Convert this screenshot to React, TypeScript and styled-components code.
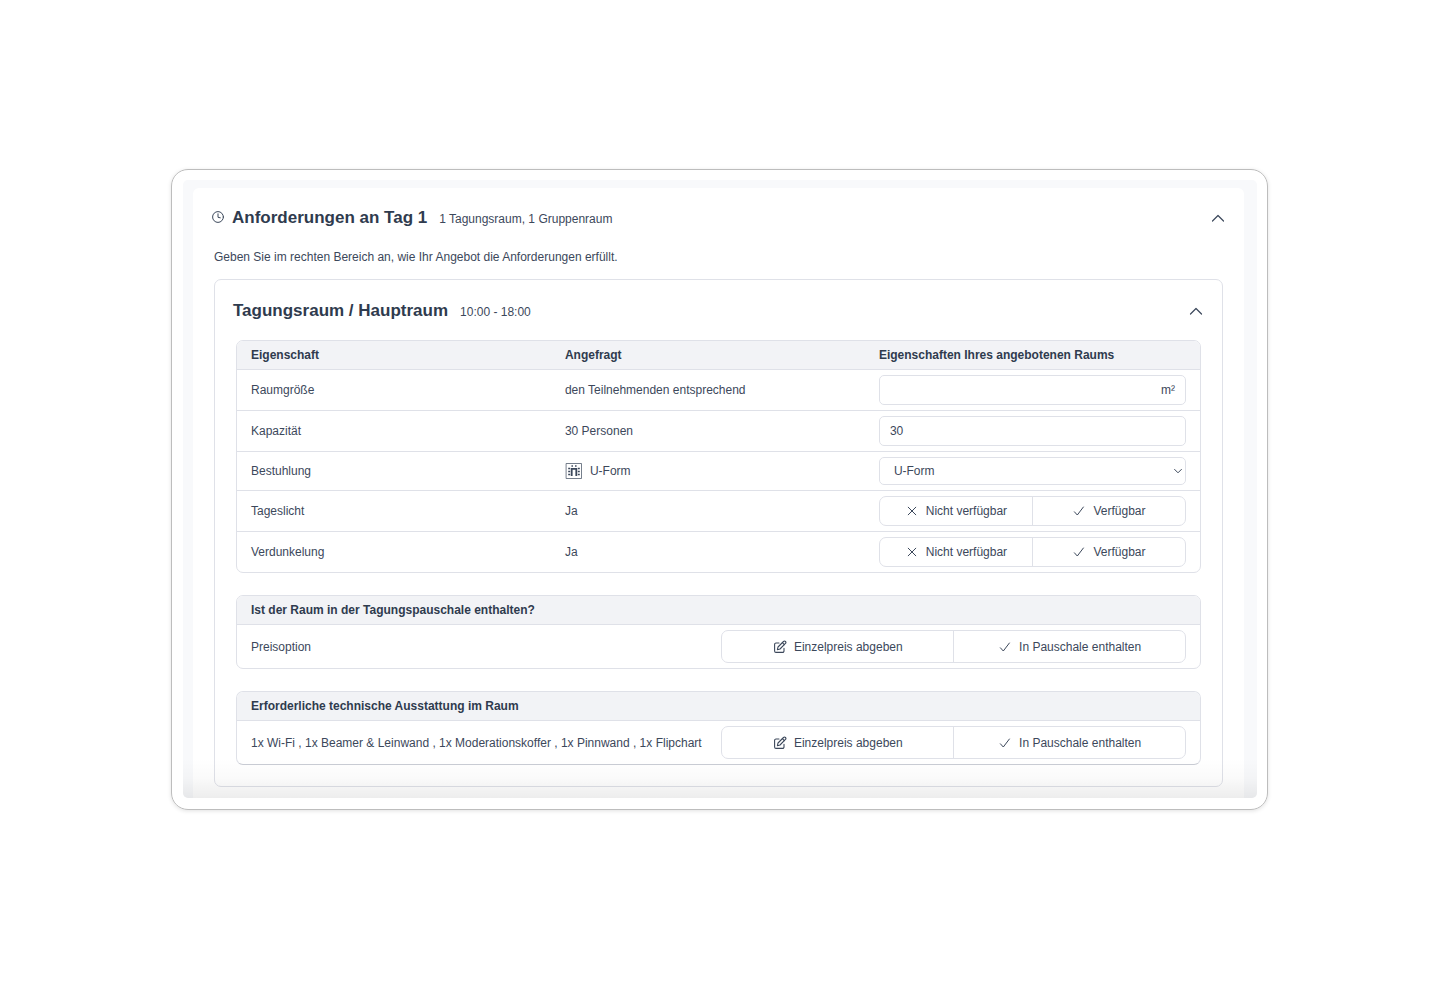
import React from "react";
import styled, { createGlobalStyle } from "styled-components";

const line = "#dfe1e8";
const ink = "#3c485b";
const strong = "#2f3b4e";

const GlobalStyle = createGlobalStyle`
  *, *::before, *::after { box-sizing: border-box; }
  body {
    margin: 0;
    background: #fff;
    color: ${ink};
    font-family: "Liberation Sans", Arial, sans-serif;
    font-size: 12px;
    line-height: 18px;
  }
  button, input, select { font: inherit; color: inherit; }
`;

const Page = styled.main`
  min-height: 100vh;
  padding: 169px 172px 169px 171px;
`;

const Frame = styled.div`
  padding: 10px 10px 11px 11px;
  border: 1px solid #bdbdbd;
  border-radius: 17px;
  box-shadow: 0 1px 4px rgba(0, 0, 0, 0.12);
`;

const Viewport = styled.div`
  position: relative;
  padding: 8px 13px 0 10px;
  border-radius: 5px;
  background: #f8f9fb;
  overflow: hidden;

  &::after {
    content: "";
    position: absolute;
    inset: auto 0 0;
    height: 40px;
    background: linear-gradient(rgba(0, 0, 0, 0), rgba(0, 0, 0, 0.02) 50%, rgba(0, 0, 0, 0.07));
    pointer-events: none;
  }
`;

const DayCard = styled.section`
  padding: 18px 21px 11px;
  border-radius: 6px 6px 0 0;
  background: #fff;
`;

const Header = styled.header`
  display: flex;
  align-items: center;
  height: 24px;
`;

const DayHeader = styled(Header)`
  margin: 0 -6px 0 -2px;
`;

const RoomHeader = styled(Header)`
  margin: 0 -6px 17px -3px;
`;

const Title = styled.h2`
  margin: 0 12px 0 0;
  color: ${strong};
  font-size: 17px;
  line-height: 24px;
`;

const Heading = styled.div`
  display: flex;
  flex: 1;
  align-items: baseline;
`;

const Toggle = styled.button`
  display: flex;
  padding: 4px;
  border: 0;
  background: none;
`;

const Glyph = styled.svg`
  flex: none;
  fill: none;
  stroke: currentColor;
  stroke-linecap: round;
  stroke-linejoin: round;
`;

const ClockGlyph = styled(Glyph)`
  margin: 0 8px 2px 0;
`;

const Intro = styled.p`
  margin: 18px 0 13px;
`;

const Room = styled.section`
  padding: 19px 21px 21px;
  border: 1px solid ${line};
  border-radius: 7px;
`;

const Stack = styled.div`
  display: flex;
  flex-direction: column;
  gap: 22px;
`;

const Table = styled.table<{ $shaded?: boolean }>`
  width: 100%;
  table-layout: fixed;
  border: 1px solid ${line};
  border-bottom-color: ${(p) => (p.$shaded ? "#c9ccd4" : line)};
  border-radius: 7px;
  border-spacing: 0;
  overflow: hidden;
`;

const Col = styled.col<{ $share: string }>`
  width: ${(p) => p.$share};
`;

const Th = styled.th`
  height: 29px;
  padding: 0 14px;
  border-bottom: 1px solid ${line};
  background: #f2f3f6;
  color: ${strong};
  text-align: left;
`;

const Td = styled.td<{ $flush?: boolean }>`
  padding: 5px 14px;
  padding-left: ${(p) => (p.$flush ? 0 : 14)}px;
  white-space: nowrap;

  tr:not(:last-child) > & { border-bottom: 1px solid ${line}; }
`;

const LabelTd = styled(Td)`
  padding-right: 0;
`;

const Field = styled.div`
  display: flex;
  align-items: center;
  height: 30px;
  padding: 0 10px;
  border: 1px solid ${line};
  border-radius: 5px;
`;

const Input = styled.input`
  flex: 1;
  min-width: 0;
  padding: 0;
  border: 0;
  outline: 0;
  background: none;
`;

const SelectBox = styled.div`
  display: grid;
  align-items: center;

  > * { grid-area: 1 / 1; }
  > svg { justify-self: end; margin-right: 2px; pointer-events: none; }
`;

const Select = styled.select`
  appearance: none;
  width: 100%;
  height: 28px;
  padding: 0 14px;
  border: 1px solid ${line};
  border-radius: 5px;
  background: #fff;
`;

const WithIcon = styled.span`
  display: flex;
  align-items: center;
  gap: 7px;
`;

const Choices = styled.div<{ $tall?: boolean }>`
  display: flex;
  height: ${(p) => (p.$tall ? 33 : 30)}px;
  border: 1px solid ${line};
  border-radius: 7px;
`;

const Choice = styled.button`
  display: flex;
  flex: 1;
  align-items: center;
  justify-content: center;
  gap: 7px;
  padding: 0;
  border: 0;
  background: none;

  & + & { border-left: 1px solid ${line}; }
`;

const Clock = () => (
  <ClockGlyph width="12" height="12" viewBox="0 0 12 12" aria-hidden="true">
    <circle cx="6" cy="6" r="5.4" />
    <path d="M6 2.8V6.3L8.3 6.8" />
  </ClockGlyph>
);

const ChevronUp = () => (
  <Glyph width="14" height="14" viewBox="0 0 14 14" strokeWidth="1.2" aria-hidden="true">
    <path d="M1.5 10 7 4.500l5.500 5.500" />
  </Glyph>
);

const ChevronDown = () => (
  <Glyph width="12" height="12" viewBox="0 0 12 12" strokeWidth="1" aria-hidden="true">
    <path d="M2.6 4.4 6 7.8l3.4-3.4" />
  </Glyph>
);

const Cross = () => (
  <Glyph width="14" height="14" viewBox="0 0 14 14" aria-hidden="true">
    <path d="M3.2 3.2l7.6 7.6M10.8 3.2l-7.6 7.6" />
  </Glyph>
);

const Check = () => (
  <Glyph width="14" height="14" viewBox="0 0 14 14" aria-hidden="true">
    <path d="M2.4 7.8 5.3 11 11.4 3" />
  </Glyph>
);

const Edit = () => (
  <Glyph width="14" height="14" viewBox="0 0 14 14" strokeWidth="1.1" aria-hidden="true">
    <path d="M6 3H3a1.400 1.400 0 0 0-1.400 1.400V11A1.400 1.400 0 0 0 3 12.400h6.600A1.400 1.400 0 0 0 11 11V8.400" />
    <path d="M4.400 9.700l.6-2.700 5.500-5.500a1.350 1.350 0 0 1 1.950 1.950L7 9z" />
    <path d="M9.400 2.700l1.900 1.900" />
  </Glyph>
);

const UShape = () => (
  <Glyph width="18" height="18" viewBox="0 0 18 18" aria-hidden="true">
    <rect x="1.5" y="1.5" width="15" height="15" strokeOpacity=".7" />
    <path d="M6.700 14V6.800h4.600V14" strokeWidth="1.800" strokeLinecap="butt" strokeLinejoin="miter" />
    <path
      d="M7.200 3.200v1.600M10.800 3.200v1.600M3.200 6.500h2M3.200 9.500h2M3.200 12.500h2M12.800 6.500h2M12.800 9.500h2M12.800 12.500h2"
      strokeWidth="1.500"
      strokeLinecap="butt"
    />
  </Glyph>
);

const Availability = ({ label }: { label: string }) => (
  <Choices role="group" aria-label={label}>
    <Choice type="button"><Cross />Nicht verfügbar</Choice>
    <Choice type="button"><Check />Verfügbar</Choice>
  </Choices>
);

const PriceTable = ({ title, label, shaded }: { title: string; label: string; shaded?: boolean }) => (
  <Table $shaded={shaded}>
    <colgroup><Col $share="auto" /><Col $share="49.7%" /></colgroup>
    <thead><tr><Th colSpan={2}>{title}</Th></tr></thead>
    <tbody>
      <tr>
        <LabelTd>{label}</LabelTd>
        <Td $flush>
          <Choices $tall role="group" aria-label={title}>
            <Choice type="button"><Edit />Einzelpreis abgeben</Choice>
            <Choice type="button"><Check />In Pauschale enthalten</Choice>
          </Choices>
        </Td>
      </tr>
    </tbody>
  </Table>
);

export default function App() {
  return (
    <Page>
      <GlobalStyle />
      <Frame>
        <Viewport>
          <DayCard>
            <DayHeader>
              <Clock />
              <Heading><Title>Anforderungen an Tag 1</Title>1 Tagungsraum, 1 Gruppenraum</Heading>
              <Toggle type="button" aria-label="Tag 1 einklappen"><ChevronUp /></Toggle>
            </DayHeader>
            <Intro>Geben Sie im rechten Bereich an, wie Ihr Angebot die Anforderungen erfüllt.</Intro>
            <Room>
              <RoomHeader>
                <Heading><Title as="h3">Tagungsraum / Hauptraum</Title>10:00 - 18:00</Heading>
                <Toggle type="button" aria-label="Hauptraum einklappen"><ChevronUp /></Toggle>
              </RoomHeader>
              <Stack>
                <Table>
                  <colgroup><Col $share="32.6%" /><Col $share="32.6%" /><Col $share="auto" /></colgroup>
                  <thead>
                    <tr><Th>Eigenschaft</Th><Th>Angefragt</Th><Th>Eigenschaften Ihres angebotenen Raums</Th></tr>
                  </thead>
                  <tbody>
                    <tr>
                      <Td><label htmlFor="size">Raumgröße</label></Td>
                      <Td>den Teilnehmenden entsprechend</Td>
                      <Td><Field><Input id="size" />m²</Field></Td>
                    </tr>
                    <tr>
                      <Td><label htmlFor="capacity">Kapazität</label></Td>
                      <Td>30 Personen</Td>
                      <Td><Field><Input id="capacity" defaultValue="30" /></Field></Td>
                    </tr>
                    <tr>
                      <Td><label htmlFor="seating">Bestuhlung</label></Td>
                      <Td><WithIcon><UShape />U-Form</WithIcon></Td>
                      <Td>
                        <SelectBox>
                          <Select id="seating"><option>U-Form</option></Select>
                          <ChevronDown />
                        </SelectBox>
                      </Td>
                    </tr>
                    <tr><Td>Tageslicht</Td><Td>Ja</Td><Td><Availability label="Tageslicht" /></Td></tr>
                    <tr><Td>Verdunkelung</Td><Td>Ja</Td><Td><Availability label="Verdunkelung" /></Td></tr>
                  </tbody>
                </Table>
                <PriceTable title="Ist der Raum in der Tagungspauschale enthalten?" label="Preisoption" />
                <PriceTable
                  shaded
                  title="Erforderliche technische Ausstattung im Raum"
                  label="1x Wi-Fi , 1x Beamer & Leinwand , 1x Moderationskoffer , 1x Pinnwand , 1x Flipchart"
                />
              </Stack>
            </Room>
          </DayCard>
        </Viewport>
      </Frame>
    </Page>
  );
}
